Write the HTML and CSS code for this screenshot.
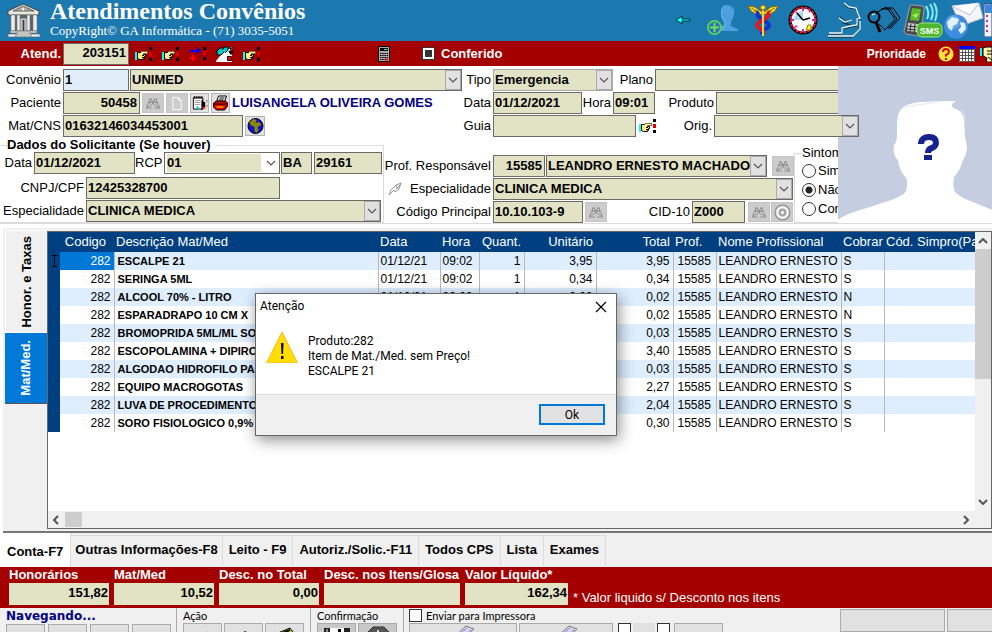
FILE: index.html
```html
<!DOCTYPE html>
<html lang="pt-BR">
<head>
<meta charset="utf-8">
<meta name="viewport" content="width=device-width, initial-scale=1">
<title>Atendimentos Convênios</title>
<link rel="stylesheet" href="styles.css">
</head>
<body>
<svg class="defs" aria-hidden="true">
  <symbol id="chevron" viewBox="0 0 10 6"><path d="M1 1l4 4 4-4" fill="none" stroke="#555" stroke-width="1.2"/></symbol>
  <symbol id="hand" viewBox="0 0 17 16">
    <path d="M0 6h2v8H0z" fill="#0ff"/><path d="M2.500 6.500h3l1-1h6v2h-4v1h2v2h-1v2h-1v1h-4l-2-1z" fill="#ffef7a" stroke="#000"/>
    <path d="M12.500 5.500h-6v2h6z" fill="#fff3a0"/><path d="M7 9.500h2M7 11.500h2" stroke="#000"/>
    <path d="M14 1h3v3h-3zM14 12h3v3h-3z" fill="#000"/><path d="M14 6h3v4h-3z" fill="#d00"/>
  </symbol>
  <symbol id="binoculars" viewBox="0 0 14 12">
    <path d="M3 1h3v2h2V1h3v2l1 2 2 5v1H8V7H6v4H0v-1l2-5 1-2z" fill="#949494"/><path d="M3 6v4M5 5v5M9 5v5M11 6v4M4 3h1M9 3h1" stroke="#fff" fill="none" stroke-dasharray="2 1"/>
  </symbol>
  <symbol id="printer" viewBox="0 0 16 16">
    <path d="M6 1h8l-2 6H4z" fill="#fff" stroke="#000"/><path d="M7 3h5M6 5h5" stroke="#000"/><path d="M1 8l3-2h9l2 2v3l-3 4H4l-3-3z" fill="#d00" stroke="#000"/><path d="M1 9h13" stroke="#000"/><path d="M4 12h7" stroke="#ff0"/>
  </symbol>
  <symbol id="sheet" viewBox="0 0 24 16">
    <path d="M2 14L15 2l8 3L11 16z" fill="#d6d6e6" stroke="#777"/><path d="M8 11l8-7M12 13l8-7" stroke="#55f" stroke-dasharray="2 1"/>
  </symbol>
</svg>

<header class="banner">
  <svg class="logo" viewBox="0 0 33 34">
    <path d="M16 1L1 8v4h31V8z" fill="#e8e8e0" stroke="#444"/><path d="M16 3L6 8h21z" fill="#aaa89c" stroke="#666"/><circle cx="16" cy="6" r="1.500" fill="#eee"/>
    <path d="M3 12h27v15H3z" fill="#5a6468"/>
    <path d="M4 12h4v16H4zM10 12h3v16h-3zM20 12h3v16h-3zM26 12h4v16h-4z" fill="#eee" stroke="#777" stroke-width=".6"/>
    <path d="M14 16h5v12h-5z" fill="#9a9a92" stroke="#ddd"/><path d="M16.500 17v11" stroke="#333"/>
    <path d="M3 28h27v2H3zM1 31h32v3H1z" fill="#eee" stroke="#666" stroke-width=".7"/>
    <path d="M11 28h11l3 6H8z" fill="#c4c4bc" stroke="#777" stroke-width=".6"/>
  </svg>
  <div class="brand">
    <h1>Atendimentos Convênios</h1>
    <p>CopyRight© GA Informática - (71) 3035-5051</p>
  </div>
  <nav class="tools" aria-label="Ferramentas">
    <svg class="t-arrow" viewBox="0 0 16 10"><path d="M1 5l6-4v3h8v2H7v3z" fill="#1ff" stroke="#033"/></svg>
    <svg class="t-user" viewBox="0 0 32 32">
      <path d="M20 1c5 0 8 4 7 9-.5 4-2 6-3 8v4l7 3v2H9v-3l8-3v-4c-2-2-3-4-3-8 0-5 2-8 6-8z" fill="#4d9fe0"/><path d="M18 2c-4 2-4 7-3 11l3 6v4l-7 3" fill="none" stroke="#6fb5ea"/>
      <circle cx="7.500" cy="23.500" r="6.500" fill="#3866c2" stroke="#53d456" stroke-width="2"/><path d="M7.500 19v9M3 23.500h9" stroke="#5dea55" stroke-width="2"/>
    </svg>
    <svg class="t-med" viewBox="0 0 32 33">
      <path d="M1 2l7 1 7 5h2l7-5 7-1-3 5-6 4-5-1h-2l-5 1-6-4z" fill="#ffe23c" stroke="#8b6500"/><path d="M4 4l8 4M7 7l5 2M28 4l-8 4M25 7l-5 2" stroke="#8b6500"/>
      <path d="M12 8c-7 5 10 9 10 13s-8 4-7 9" fill="none" stroke="#1136cf" stroke-width="4"/><path d="M20 8c7 5-10 9-10 13s8 4 6 8" fill="none" stroke="#e01a25" stroke-width="4"/>
      <path d="M16 5v27" stroke="#f4d63a" stroke-width="2"/><circle cx="16" cy="3.500" r="2.500" fill="#ffe23c" stroke="#8b6500"/>
    </svg>
    <svg class="t-clock" viewBox="0 0 30 30">
      <circle cx="15" cy="15" r="13" fill="#fff" stroke="#000" stroke-width="3"/><circle cx="15" cy="15" r="12.500" fill="none" stroke="#e02040" stroke-width="2" stroke-dasharray="3 1"/>
      <path d="M6 15a9 9 0 0 1 9-9v9z" fill="#a9d8ee"/><path d="M15 15L9 8M15 15l7-2" stroke="#000" stroke-width="1.500"/><path d="M15 4v2M15 24v2M4 15h2M24 15h2M7 22l2-1M21 7l1-1M8 7l1 1" stroke="#e31be3" stroke-width="2"/><path d="M18 25l2-5h3v5z" fill="#ff3" stroke="#870"/>
    </svg>
    <svg class="t-face" viewBox="0 0 34 36" fill="none" stroke-width="1.300">
      <path d="M17 2l5 4 7 1 2 6 2 4-3 1v6l-7 1-8 2v5H2M32 20v8l-7 7H1M13 15l6 5 6-2M16 21l8 2" stroke="#173a4d"/><path d="M17 1l5 4 7 1 2 6 2 4-3 1v6l-7 1-8 2v5H2M33 19v8l-7 7H1M12 16l6 4 7-2" stroke="#eef3f5"/>
    </svg>
    <svg class="t-search" viewBox="0 0 34 28" fill="none" stroke="#000">
      <path d="M9 7l10-6 9 12-10 11-6-6M14 3h9l7 10-9 10M18 2h8l7 10-10 11"/><circle cx="7" cy="11" r="5.500" stroke-width="2"/><path d="M9 16l4 10" stroke-width="3"/><path d="M5 9l3-1" stroke="#fff"/>
    </svg>
    <svg class="t-sms" viewBox="0 0 40 36">
      <path d="M7 4q1-1 3-1l9 1q3 0 2 3l-3 25q-1 2-3 2L3 32q-2-1-2-3z" fill="#454b4e" stroke="#9da3a6"/><path d="M9 6l9 1-2 12-9-1z" fill="#5cbd29"/><path d="M9 13l4 3 3-5" fill="#a3ed61"/><path d="M5 21l10 1-1 8-10-1z" fill="#c9cdce"/><path d="M5 24l9 1M4 27l9 1M8 22l-1 8M12 22l-1 8" stroke="#333"/>
      <path d="M23 4q4 7 1 13M27 2q5 7 1 16M31 1q5 8 1 18" stroke="#7df2ff" stroke-width="2" fill="none"/><rect x="14" y="21" width="25" height="14" rx="5" fill="#4cb829" stroke="#a3e37a"/><text x="26.500" y="32" text-anchor="middle" class="sms">SMS</text>
    </svg>
    <svg class="t-mail" viewBox="0 0 40 37">
      <path d="M8 4L35 1l4 15-22 8z" fill="#f5f4fa" stroke="#b8bdd5"/><path d="M8 4l18 9 9-12" fill="#fff" stroke="#b8bdd5"/>
      <circle cx="12" cy="24.500" r="12" fill="#3f8ce0"/><circle cx="9" cy="20" r="7" fill="#78b8f2" opacity=".6"/><path d="M3 20l5-5 7 2-2 5-4 2-1 5-4-3zM16 20l5 1 1 6-5 5-3-4 3-3z" fill="#e2f1fc"/>
    </svg>
    <svg class="t-note" viewBox="0 0 8 34"><path d="M0 1h8v33H0z" fill="#f4f2ff" stroke="#313d7e"/><path d="M1 2h7v8H1z" fill="#3d85d6"/><path d="M3 12v20" stroke="#c32ba5" stroke-width="2" stroke-dasharray="2 3"/></svg>
  </nav>
</header>

<section class="bar">
  <label class="bar-label" for="atend">Atend.</label>
  <input id="atend" class="num" value="203151">
  <div class="bar-icons">
    <svg><use href="#hand"/></svg>
    <svg><use href="#hand"/></svg>
    <svg viewBox="0 0 17 16"><path d="M1 4h7V1l4 4-4 3V6H1z" fill="#00f"/><path d="M3 9h2v2h2v2H5v2H3v-2H1v-2h2z" fill="#f00"/><path d="M14 1h3v3h-3zM14 11h3v3h-3z" fill="#000"/><path d="M14 5h3v4h-3z" fill="#d00"/></svg>
    <svg viewBox="0 0 17 16"><path d="M0 15L11 1h5v15H0z" fill="#fff"/><path d="M1 5l3-3h4v4l-3 3H1z" fill="#0cc" stroke="#000"/><path d="M6 4l3-3h3v3L9 7" fill="#0cc" stroke="#000"/><path d="M12 2h3v5M13 5l2 3 2-3" stroke="#000" stroke-width="1.500" fill="none"/><path d="M11.500 10.500h4v4h-4z" fill="#f00" stroke="#000"/></svg>
    <svg><use href="#hand"/></svg>
  </div>
  <svg class="calc" viewBox="0 0 12 16"><path d="M.5.5h11v15H.5z" fill="#aaa" stroke="#000"/><path d="M2 2h8v3H2z" fill="#000"/><path d="M6 3.500h3" stroke="#0ff"/><path d="M2 7.500h8M2 9.500h8M2 11.500h8" stroke="#000" stroke-dasharray="1.500 .7"/><path d="M2 13.500h5" stroke="#000" stroke-dasharray="1.500 .7"/><path d="M7 13.500h3" stroke="#f00" stroke-width="2"/></svg>
  <label class="check"><input type="checkbox">Conferido</label>
  <strong class="priority">Prioridade</strong>
  <svg class="ic" viewBox="0 0 16 16"><circle cx="8" cy="8" r="7.500" fill="#ffe535"/><path d="M5 6q0-3 3-3t3 3q0 1.500-3 3v1.500M8 12v2" fill="none" stroke="#e00000" stroke-width="2"/></svg>
  <svg class="ic" viewBox="0 0 16 16"><path d="M0 0h16v16H0z" fill="#fff"/><path d="M0 0h16v3H0z" fill="#00f"/><path d="M.5 3.500h15v12H.5zM1 6.500h14M1 9.500h14M1 12.500h14M3.500 4v11M6.500 4v11M9.500 4v11M12.500 4v11" stroke="#333" fill="none" stroke-width=".8"/></svg>
  <svg class="ic-cut" viewBox="0 0 12 16"><path d="M0 2h2v8H0z" fill="#0ff"/><path d="M3 2l3-1h6v15H6l1-4-4-2z" fill="#fff6b0" stroke="#000"/><path d="M7 5h5M7 8h5M8 11l4 3" stroke="#000"/></svg>
</section>

<form class="form">
  <div class="row row-convenio">
    <label for="conv">Convênio</label>
    <input id="conv" class="light" value="1">
    <span class="combo"><select aria-label="Nome do convênio"><option>UNIMED</option></select><span class="arrow"><svg><use href="#chevron"/></svg></span></span>
    <label for="tipo">Tipo</label>
    <span class="combo soft"><select id="tipo"><option>Emergencia</option></select><span class="arrow"><svg><use href="#chevron"/></svg></span></span>
    <label for="plano">Plano</label>
    <input id="plano">
  </div>
  <div class="row row-paciente">
    <label for="pac">Paciente</label>
    <input id="pac" class="num" value="50458">
    <div class="buttons">
      <button type="button" class="off" aria-label="Procurar"><svg viewBox="0 0 14 12"><use href="#binoculars"/></svg></button>
      <button type="button" class="off" aria-label="Novo"><svg viewBox="0 0 12 14"><path d="M1.500.5h6l3 3v10h-9zM7.500.5v3h3" fill="#ccc" stroke="#fff"/></svg></button>
      <button type="button" class="sm" aria-label="Agenda"><svg viewBox="0 0 18 16"><path d="M2.500 2.500h10v12h-10z" fill="#fff" stroke="#000"/><path d="M3 2h9" stroke="#000" stroke-width="3" stroke-dasharray="1 1"/><path d="M4 5.500h6M4 7.500h6M4 9.500h6" stroke="#999"/><path d="M12 5v10M14 7v6" stroke="#000" stroke-width="2"/><path d="M6 12l3 3" stroke="#0cc" stroke-width="2"/><path d="M12 13h3" stroke="#f22" stroke-width="2"/><path d="M17 5v2M17 10v2" stroke="#a60"/></svg></button>
      <button type="button" class="sm" aria-label="Imprimir"><svg viewBox="0 0 16 16"><use href="#printer"/></svg></button>
    </div>
    <strong class="patient">LUISANGELA OLIVEIRA GOMES</strong>
    <label for="data">Data</label>
    <input id="data" value="01/12/2021">
    <label for="hora">Hora</label>
    <input id="hora" value="09:01">
    <label for="prod">Produto</label>
    <input id="prod">
  </div>
  <div class="row row-cns">
    <label for="cns">Mat/CNS</label>
    <input id="cns" value="01632146034453001">
    <button type="button" class="globe" aria-label="Internet"><svg viewBox="0 0 16 16"><circle cx="8" cy="8" r="7.500" fill="#11c" stroke="#000"/><path d="M2 4l4-3 3 1-1 3 3-1 3 2-2 2-2 1 1 3-2 3-2-2V9L5 8 3 7z" fill="#8a8a00"/></svg></button>
    <label for="guia">Guia</label>
    <input id="guia">
    <svg class="hand"><use href="#hand"/></svg>
    <label for="orig">Orig.</label>
    <span class="combo over"><select id="orig"><option></option></select><span class="arrow"><svg><use href="#chevron"/></svg></span></span>
  </div>
  <div class="lower">
    <fieldset class="requester">
      <legend>Dados do Solicitante (Se houver)</legend>
      <div class="row row-rcp">
        <label for="sdata">Data</label>
        <input id="sdata" value="01/12/2021">
        <label for="rcp">RCP</label>
        <span class="combo plain"><select id="rcp"><option>01</option></select><span class="arrow"><svg><use href="#chevron"/></svg></span></span>
        <input class="uf" aria-label="UF" value="BA">
        <input aria-label="Número do conselho" value="29161">
      </div>
      <div class="row row-cnpj">
        <label for="cnpj">CNPJ/CPF</label>
        <input id="cnpj" value="12425328700">
      </div>
      <div class="row row-esp">
        <label for="esp">Especialidade</label>
        <span class="combo"><select id="esp"><option>CLINICA MEDICA</option></select><span class="arrow"><svg><use href="#chevron"/></svg></span></span>
      </div>
    </fieldset>
    <div class="doctor">
      <div class="row row-prof">
        <label for="prof">Prof. Responsável</label>
        <input id="prof" class="num" value="15585">
        <span class="combo"><select aria-label="Nome do profissional"><option>LEANDRO ERNESTO MACHADO</option></select><span class="arrow"><svg><use href="#chevron"/></svg></span></span>
        <button type="button" class="off" aria-label="Procurar"><svg viewBox="0 0 14 12"><use href="#binoculars"/></svg></button>
      </div>
      <div class="row row-pesp">
        <svg class="pen" viewBox="0 0 14 14"><path d="M1 13l2-5 5-5 5-2-2 6-4 3-1-2zM8 3l1 4 4-6" fill="#fff" stroke="#999"/></svg>
        <label for="pesp">Especialidade</label>
        <span class="combo"><select id="pesp"><option>CLINICA MEDICA</option></select><span class="arrow"><svg><use href="#chevron"/></svg></span></span>
      </div>
      <div class="row row-cod">
        <label for="cod">Código Principal</label>
        <input id="cod" value="10.10.103-9">
        <button type="button" class="off" aria-label="Procurar código"><svg viewBox="0 0 14 12"><use href="#binoculars"/></svg></button>
        <label for="cid">CID-10</label>
        <input id="cid" value="Z000">
        <button type="button" class="off" aria-label="Procurar CID"><svg viewBox="0 0 14 12"><use href="#binoculars"/></svg></button>
        <button type="button" class="off" aria-label="Alvo"><svg viewBox="0 0 16 16" class="target"><circle cx="8" cy="8" r="7" fill="#ccc" stroke="#888"/><circle cx="8" cy="8" r="5" fill="none" stroke="#fff" stroke-width="1.500"/><circle cx="8" cy="8" r="2.500" fill="#eee" stroke="#888"/></svg></button>
      </div>
    </div>
    <fieldset class="symptoms">
      <legend>Sintomas</legend>
      <label><input type="radio" name="s">Sim</label>
      <label><input type="radio" name="s" checked>Não</label>
      <label><input type="radio" name="s">Con</label>
    </fieldset>
  </div>
  <svg class="photo" viewBox="0 0 154 157">
    <path d="M0 0h154v157H0z" fill="#c5cde1"/>
    <path d="M0 157v-3c8-7 24-10 38-15 12-4 27-8 30-14 1-4 2-9 0-13-4-5-7-10-8-18-4-3-5-10-4-15 3-3 3-8 3-14 0-10 0-16 4-22 5-5 14-7 23-7 10-1 22-1 32-1-4 2-5 4-3 7 6 2 10 4 11 12l1 17c1 4 2 8 2 12-1 5-2 8-4 11-2 6-4 12-9 17-1 6-1 11 1 15 6 7 22 11 37 18v13z" fill="#fff"/>
    <path d="M62 45c2-6 22-6 38-9M123 43c3 4 4 9 4 13" stroke="#e3e8f2" fill="none"/>
    <path d="M83 78v-1q1-6 8-6 7 0 7 6 0 3-4 5-4 1-4 5" fill="none" stroke="#16228f" stroke-width="6"/><path d="M86 89h8v5h-8z" fill="#16228f"/>
  </svg>
</form>

<main class="workspace">
  <div class="side" role="tablist">
    <button type="button" class="side-tab"><span>Honor. e Taxas</span></button>
    <button type="button" class="side-tab current"><span>Mat/Med.</span></button>
  </div>
  <div class="sheet">
    <div class="view">
      <table>
        <colgroup><col class="c-mark"><col class="c-cod"><col class="c-desc"><col class="c-data"><col class="c-hora"><col class="c-qtd"><col class="c-unit"><col class="c-total"><col class="c-prof"><col class="c-nome"><col class="c-cobrar"><col></colgroup>
        <thead><tr><th></th><th class="r">Codigo</th><th>Descrição Mat/Med</th><th>Data</th><th>Hora</th><th class="r">Quant.</th><th class="r">Unitário</th><th class="r">Total</th><th>Prof.</th><th>Nome Profissional</th><th>Cobrar</th><th>Cód. Simpro(Pa</th></tr></thead>
        <tbody>
          <tr><td><svg class="caret" viewBox="0 0 7 12"><path d="M1 .5h5M1 11.500h5M3.500 0v12" stroke="#000"/></svg></td><td class="r sel">282</td><td>ESCALPE 21</td><td>01/12/21</td><td>09:02</td><td class="r">1</td><td class="r">3,95</td><td class="r">3,95</td><td>15585</td><td>LEANDRO ERNESTO</td><td>S</td><td></td></tr>
          <tr><td></td><td class="r">282</td><td>SERINGA 5ML</td><td>01/12/21</td><td>09:02</td><td class="r">1</td><td class="r">0,34</td><td class="r">0,34</td><td>15585</td><td>LEANDRO ERNESTO</td><td>S</td><td></td></tr>
          <tr><td></td><td class="r">282</td><td>ALCOOL 70% - LITRO</td><td>01/12/21</td><td>09:02</td><td class="r">1</td><td class="r">0,02</td><td class="r">0,02</td><td>15585</td><td>LEANDRO ERNESTO</td><td>N</td><td></td></tr>
          <tr><td></td><td class="r">282</td><td>ESPARADRAPO 10 CM X</td><td></td><td></td><td></td><td></td><td class="r">0,02</td><td>15585</td><td>LEANDRO ERNESTO</td><td>N</td><td></td></tr>
          <tr><td></td><td class="r">282</td><td>BROMOPRIDA 5ML/ML SO</td><td></td><td></td><td></td><td></td><td class="r">0,03</td><td>15585</td><td>LEANDRO ERNESTO</td><td>S</td><td></td></tr>
          <tr><td></td><td class="r">282</td><td>ESCOPOLAMINA + DIPIRO</td><td></td><td></td><td></td><td></td><td class="r">3,40</td><td>15585</td><td>LEANDRO ERNESTO</td><td>S</td><td></td></tr>
          <tr><td></td><td class="r">282</td><td>ALGODAO HIDROFILO PA</td><td></td><td></td><td></td><td></td><td class="r">0,03</td><td>15585</td><td>LEANDRO ERNESTO</td><td>S</td><td></td></tr>
          <tr><td></td><td class="r">282</td><td>EQUIPO MACROGOTAS</td><td></td><td></td><td></td><td></td><td class="r">2,27</td><td>15585</td><td>LEANDRO ERNESTO</td><td>S</td><td></td></tr>
          <tr><td></td><td class="r">282</td><td>LUVA DE PROCEDIMENTO</td><td></td><td></td><td></td><td></td><td class="r">2,04</td><td>15585</td><td>LEANDRO ERNESTO</td><td>S</td><td></td></tr>
          <tr><td></td><td class="r">282</td><td>SORO FISIOLOGICO 0,9%</td><td></td><td></td><td></td><td></td><td class="r">0,30</td><td>15585</td><td>LEANDRO ERNESTO</td><td>S</td><td></td></tr>
        </tbody>
      </table>
      <div class="vscroll">
        <svg viewBox="0 0 10 6"><path d="M1 5l4-4 4 4" fill="none" stroke="#555" stroke-width="2"/></svg>
        <span class="vthumb"></span>
        <svg viewBox="0 0 10 6"><path d="M1 1l4 4 4-4" fill="none" stroke="#555" stroke-width="2"/></svg>
      </div>
    </div>
    <div class="hscroll">
      <svg viewBox="0 0 6 10"><path d="M5 1L1 5l4 4" fill="none" stroke="#555" stroke-width="2"/></svg>
      <span class="hthumb"></span>
      <svg viewBox="0 0 6 10"><path d="M1 1l4 4-4 4" fill="none" stroke="#555" stroke-width="2"/></svg>
    </div>
  </div>
  <div class="dialog" role="alertdialog" aria-labelledby="dt">
    <div class="dialog-head"><span id="dt">Atenção</span><button type="button" class="close" aria-label="Fechar"><svg viewBox="0 0 12 12"><path d="M1 1l10 10M11 1L1 11" stroke="#000" stroke-width="1.200"/></svg></button></div>
    <div class="dialog-body">
      <svg viewBox="0 0 32 32"><path d="M16 1l15.500 31H.5z" fill="#ffde00" stroke="#f7b32b"/><path d="M15 12h2.500l-.5 11h-1.500zM15 25h2.500v3H15z" fill="#000"/></svg>
      <p>Produto:282<br>Item de Mat./Med. sem Preço!<br>ESCALPE 21</p>
    </div>
    <div class="dialog-foot"><button type="button" class="ok">Ok</button></div>
  </div>
</main>

<nav class="tabs">
  <button type="button" class="tab current">Conta-F7</button>
  <button type="button" class="tab tight">Outras Informações-F8</button>
  <button type="button" class="tab">Leito - F9</button>
  <button type="button" class="tab">Autoriz./Solic.-F11</button>
  <button type="button" class="tab">Todos CPS</button>
  <button type="button" class="tab">Lista</button>
  <button type="button" class="tab">Exames</button>
</nav>

<section class="totals">
  <label>Honorários<input value="151,82"></label>
  <label>Mat/Med<input value="10,52"></label>
  <label>Desc. no Total<input value="0,00"></label>
  <label class="wide">Desc. nos Itens/Glosa<input value=""></label>
  <label class="net">Valor Líquido*<input value="162,34"></label>
  <p>* Valor liquido s/ Desconto nos itens</p>
</section>

<footer class="actions">
  <div class="group nav-group">
    <strong>Navegando...</strong>
    <div class="keys"><button type="button" aria-label="Primeiro"></button><button type="button" aria-label="Anterior"></button><button type="button" aria-label="Próximo"><svg viewBox="0 0 24 16"><path d="M10 9l4-2 2 1v6z" fill="#0a0"/></svg></button><button type="button" aria-label="Último"></button></div>
  </div>
  <div class="group">
    <span>Ação</span>
    <div class="keys"><button type="button" aria-label="Novo"><svg viewBox="0 0 24 16"><path d="M13 9l3-2 1 3-3 5z" fill="#cc3"/></svg></button><button type="button" aria-label="Editar"><svg viewBox="0 0 24 16"><path d="M10 9l3-2 2 1v6h-5z" fill="#222"/></svg></button><button type="button" aria-label="Excluir"><svg viewBox="0 0 24 16"><path d="M5 9l12-5 3 4-3 8H7z" fill="#dcd23a" stroke="#000"/><path d="M7 10l10-4M8 13l10-4" stroke="#000" stroke-width="2"/></svg></button></div>
  </div>
  <div class="group">
    <span>Confirmação</span>
    <div class="keys"><button type="button" class="dark" aria-label="Salvar"><svg viewBox="0 0 28 16"><path d="M1 4h26v12H1z" fill="#222"/><path d="M7 4h14v5H7z" fill="#fff"/><path d="M15 5h3v4h-3z" fill="#000"/><path d="M3 5h2v8H3z" fill="#888"/></svg></button><button type="button" class="dark" aria-label="Cancelar"><svg viewBox="0 0 28 16"><path d="M9 3h11l7 7v6H2v-6z" fill="#555" stroke="#333"/><path d="M8 9h12M14 6v9" stroke="#ddd" stroke-width="2"/></svg></button></div>
  </div>
  <div class="group print">
    <label class="opt"><input type="checkbox">Enviar para Impressora</label>
    <div class="keys"><button type="button" class="k-long" aria-label="Imprimir conta"><svg viewBox="0 0 24 16"><use href="#sheet"/></svg></button><button type="button" class="k-mid" aria-label="Imprimir guia"><svg viewBox="0 0 24 16"><use href="#sheet"/></svg></button><input type="checkbox" class="first" aria-label="Opção 1"><span class="plate"></span><input type="checkbox" aria-label="Opção 2"><button type="button" class="k-short" aria-label="Opções"></button></div>
  </div>
  <div class="big"><button type="button" aria-label="Solicitação"></button><button type="button" aria-label="Fechamento"></button></div>
</footer>
</body>
</html>
```
FILE: styles.css
```css
* { box-sizing: border-box; }

:root {
  --blue: #1c79af;
  --red: #a40000;
  --field: #e2e2c4;
  --edge: #6b6b66;
  --face: #f0f0f0;
  --line: #dcdcdc;
  --navy: #004080;
  --accent: #0078d7;
}

body {
  display: flex;
  flex-direction: column;
  height: 100vh;
  margin: 0;
  overflow: hidden;
  background: #fff;
  color: #000;
  font: 13px/16px "Liberation Sans", Arial, sans-serif;
}

body > * { flex: none; }
.defs { position: absolute; width: 0; height: 0; }
svg { display: block; flex: none; }
button, input, select { font: inherit; margin: 0; min-width: 0; }
button { padding: 0; color: inherit; }
h1, p { margin: 0; }

/* banner */
.banner { display: flex; height: 41px; padding-left: 7px; background: var(--blue); color: #fff; overflow: hidden; }
.logo { width: 33px; height: 34px; margin: 3px 10px 0 0; }
.brand { font-family: "Liberation Serif", "Times New Roman", serif; white-space: nowrap; }
.brand h1 { font-size: 24px; line-height: 23px; }
.brand p { font-size: 13px; line-height: 15px; }
.tools { display: flex; align-items: center; margin-left: auto; height: 40px; }
.t-arrow { width: 16px; height: 10px; margin-right: 16px; }
.t-user { width: 32px; height: 32px; margin-right: 8px; }
.t-med { width: 32px; height: 33px; margin-right: 9px; }
.t-clock { width: 30px; height: 30px; margin-right: 9px; }
.t-face { width: 34px; height: 36px; margin-right: 6px; }
.t-search { width: 34px; height: 28px; margin-right: 2px; }
.t-sms { width: 40px; height: 36px; margin-right: 1px; }
.t-mail { width: 40px; height: 37px; }
.t-note { width: 8px; height: 34px; }
.sms { font: bold 9px "Liberation Sans", sans-serif; fill: #fff; }

/* red bar */
.bar { display: flex; align-items: center; height: 25px; background: var(--red); color: #fff; font-weight: bold; overflow: hidden; }
.bar-label { width: 63px; padding-right: 2px; text-align: right; }
.bar input:not([type]) { width: 66px; }
.bar-icons { display: flex; gap: 10px; margin-left: 6px; }
.bar-icons svg { width: 17px; height: 16px; }
.calc { width: 12px; height: 16px; margin-left: 118px; }
.check { display: flex; align-items: center; gap: 6px; margin-left: 32px; }
.check input { appearance: none; width: 13px; height: 13px; border: 3px solid #fff; background: #333; outline: 1px solid #333; outline-offset: -1px; }
.priority { margin: 0 12px 0 auto; font-size: 12px; }
.ic { width: 16px; height: 16px; margin-right: 5px; }
.ic-cut { width: 12px; height: 16px; }

/* form fields */
.form input:not([type]), .bar input:not([type]) {
  height: 22px;
  padding: 0 2px 2px 1px;
  border: 1px solid var(--edge);
  border-radius: 0;
  background: var(--field);
  color: #000;
  font-weight: bold;
}
.form input.light { background: #e0eef9; }
.form input.num, .bar input.num { text-align: right; }

.combo { display: grid; height: 22px; min-width: 0; border: 1px solid var(--edge); background: var(--field); }
.combo select, .combo .arrow { grid-area: 1 / 1; }
.combo select { appearance: none; width: 100%; height: 20px; padding: 0 16px 0 1px; border: 0; background: none; color: #000; font-weight: bold; }
.arrow { display: grid; place-items: center; justify-self: end; width: 16px; height: 20px; border: 1px solid #aaa; background: #e1e1e1; pointer-events: none; }
.arrow svg { width: 10px; height: 6px; }
.combo.soft { border-color: #aaa; }
.combo.plain { background: #fff; }
.combo.plain select { width: calc(100% - 20px); height: 18px; margin: 1px 2px; background: var(--field); padding: 0; }
.combo.plain .arrow { border: 0; background: none; }
.combo.over { position: relative; z-index: 2; }

.form { position: relative; padding-top: 3px; border-bottom: 1px solid var(--line); overflow: hidden; }
.row { display: grid; align-items: center; height: 22px; margin-bottom: 1px; }
.row label { padding-right: 2px; text-align: right; white-space: nowrap; }
.row-convenio { grid-template-columns: 63px 67px 332px 31px 120px 42px 1fr; }
.row-convenio .light { width: 66px; }
.row-paciente { grid-template-columns: 63px 77px 92px 231px 30px 89px 31px 42px 61px 1fr; }
.row-cns { grid-template-columns: 63px 182px 20px 228px 143px 24px 54px 145px; }
.row-cns #cns { width: 180px; }
.patient { color: #000080; white-space: nowrap; }
.buttons { display: flex; gap: 2px; padding-left: 2px; }
.form button { display: grid; place-items: center; height: 20px; border: 1px solid #b4b4b4; background: #e1e1e1; }
.form button.off { width: 22px; height: 20px; border-color: #c4c4c4; background: #ccc; }
.form button.sm { width: 19px; }
.off svg { width: 14px; height: 13px; }
.off .target { width: 17px; height: 17px; }
.sm svg, .globe svg { width: 17px; height: 16px; }
.hand { width: 17px; height: 16px; margin-left: 3px; }

.lower { display: flex; height: 85px; }
fieldset { margin: 0; padding: 0; border: 1px solid var(--line); min-width: 0; }
legend { padding: 0; }
.requester { width: 384px; border-left: 0; }
.requester legend { margin-left: 7px; padding-right: 4px; font-weight: bold; line-height: 14px; }
.row-rcp { grid-template-columns: 34px 101px 29px 117px 33px 68px; margin-bottom: 3px; }
.row-rcp .combo { width: 116px; }
.row-rcp .uf { width: 31px; }
.row-cnpj { grid-template-columns: 86px 194px; }
.row-esp { grid-template-columns: 86px 295px; }
.doctor { width: 410px; padding-top: 17px; }
.row-prof { grid-template-columns: 109px 53px 221px 5px 22px; }
.row-prof input { width: 52px; }
.row-prof button { grid-column: 5; }
.row-pesp { grid-template-columns: 4px 14px 91px 300px; }
.row-pesp .pen { grid-column: 2; width: 14px; height: 14px; }
.row-cod { grid-template-columns: 109px 92px 22px 85px 56px 23px 22px; }
.row-cod #cod { width: 90px; }
.row-cod #cid { width: 53px; }
.symptoms { flex: 1; margin-top: 7px; }
.symptoms legend { margin-left: 7px; line-height: 16px; }
.symptoms label { display: flex; align-items: center; gap: 2px; height: 19px; padding-left: 7px; }
.symptoms input { appearance: none; width: 14px; height: 14px; border: 1px solid #333; border-radius: 50%; background: #fff; }
.symptoms input:checked { background: radial-gradient(circle, #222 0 3px, #fff 4px); }
.photo { position: absolute; top: 0; right: 0; width: 154px; height: 157px; z-index: 1; }

/* item sheet */
.workspace { position: relative; display: flex; margin: 4px 0 0 3px; background: var(--face); border-bottom: 2px solid #777; }
.side { width: 44px; padding-top: 2px; }
.side-tab { display: grid; place-items: center; width: 42px; height: 103px; margin-left: 2px; border: 1px solid #fff; border-right: 0; background: var(--face); font-weight: bold; }
.side-tab span { writing-mode: vertical-rl; transform: rotate(180deg); }
.side-tab.current { height: 71px; border: 0; border-bottom: 1px solid #555; background: var(--accent); color: #fff; }
.sheet { flex: 1; min-width: 0; margin: 3px 0 2px; border: 1px solid #666; background: #fff; }
.view { display: flex; min-height: 279px; }
table { flex: 1; min-width: 0; align-self: flex-start; border-collapse: collapse; table-layout: fixed; width: 100%; }
.c-mark { width: 12px; }
.c-cod { width: 54px; }
.c-desc { width: 264px; }
.c-data { width: 62px; }
.c-hora { width: 39px; }
.c-qtd { width: 45px; }
.c-unit { width: 72px; }
.c-total { width: 77px; }
.c-prof { width: 43px; }
.c-nome { width: 125px; }
.c-cobrar { width: 43px; }
th, td { padding: 0 3px 0 2px; overflow: hidden; white-space: nowrap; text-align: left; }
th { height: 20px; background: var(--navy); color: #fff; font-weight: normal; }
th:nth-child(2) { padding-right: 8px; }
td { height: 18px; border-right: 1px solid #b8b8b8; font-size: 12px; line-height: 18px; }
td:first-child { padding: 0; border: 0; background: var(--navy); }
td:last-child { border-right: 0; }
td:nth-child(3) { padding-left: 3px; font-size: 11px; font-weight: bold; }
td:nth-child(9) { padding-left: 4px; }
th.r, td.r { text-align: right; }
tbody tr:nth-child(odd) { background: #deeeff; }
td.sel { background: var(--accent); color: #fff; }
.caret { width: 7px; height: 12px; margin-left: 3px; }
.vscroll { display: flex; flex-direction: column; align-items: center; width: 16px; padding: 6px 0; background: var(--face); }
.vscroll svg { width: 10px; height: 6px; }
.vthumb { width: 16px; height: 130px; margin: 5px 0 auto; background: #cdcdcd; }
.hscroll { display: flex; align-items: center; height: 17px; padding: 0 22px 0 5px; background: var(--face); }
.hscroll svg { width: 6px; height: 10px; }
.hthumb { width: 17px; height: 15px; margin: 0 auto 0 6px; background: #cdcdcd; }

/* message box */
.dialog { position: absolute; top: 65px; left: 252px; width: 362px; z-index: 5; border: 1px solid #666; background: #fff; box-shadow: 2px 4px 14px rgba(0, 0, 0, .45); font: 12px/15px Roboto, "Noto Sans", sans-serif; }
.dialog-head { display: flex; justify-content: space-between; align-items: center; height: 25px; padding: 0 9px 0 4px; }
.close { border: 0; background: none; }
.close svg { width: 12px; height: 12px; }
.dialog-body { display: flex; gap: 10px; height: 75px; padding: 12px 10px; }
.dialog-body svg { width: 32px; height: 32px; }
.dialog-body p { padding-top: 3px; }
.dialog-foot { display: flex; justify-content: flex-end; padding: 9px 11px 10px; border-top: 1px solid var(--line); background: var(--face); }
.ok { width: 66px; height: 21px; border: 2px solid var(--accent); background: #e1e1e1; line-height: 16px; }

/* page tabs */
.tabs { display: flex; align-items: flex-start; height: 34px; background: var(--face); }
.tab { height: 31px; margin-top: 2px; padding: 0 6px 2px; border: solid var(--line); border-width: 1px 1px 0 0; background: var(--face); font-weight: bold; white-space: nowrap; }
.tab.tight { padding: 0 4px 2px; }
.tab.current { height: 34px; margin-top: 0; padding: 4px 7px 0; border-top: 0; background: #fff; }

/* totals */
.totals { display: flex; gap: 5px; height: 41px; padding: 0 9px; background: var(--red); color: #fff; }
.totals label { display: flex; flex-direction: column; width: 100px; font-weight: bold; white-space: nowrap; }
.totals label.wide { width: 136px; }
.totals label.net { width: 103px; }
.totals input { height: 22px; padding: 0 1px 4px; border: 0; border-radius: 0; background: var(--field); text-align: right; font-weight: bold; }
.totals p { align-self: flex-end; padding-bottom: 2px; }

/* action strip */
.actions { display: flex; flex: 1 1 0; min-height: 24px; overflow: hidden; background: var(--face); font: 11px/15px Lato, sans-serif; }
.group { padding: 0 6px; border-right: 1px solid #aaa; }
.group strong { color: #000080; font: bold 12px/15px "DejaVu Sans", sans-serif; }
.nav-group { padding-right: 5px; }
.nav-group .keys { gap: 3px; }
.group.print { padding-left: 5px; border: 0; }
.keys { display: flex; gap: 2px; }
.keys button { display: flex; justify-content: center; width: 39px; height: 40px; border: 1px solid #aaa; background: #e1e1e1; }
.keys svg { width: 28px; height: 16px; }
.keys .dark { background: #c8c8c8; }
.keys .k-long { width: 108px; }
.keys .k-mid { width: 94px; }
.keys .k-short { width: 49px; margin-left: 2px; }
.keys .first { margin-left: 3px; }
.plate { width: 22px; height: 40px; background: #e1e1e1; }
.actions input { appearance: none; width: 13px; height: 13px; border: 1px solid #333; background: #fff; }
.opt { display: flex; align-items: center; gap: 4px; height: 15px; }
.big { display: flex; gap: 2px; margin-left: auto; padding-top: 1px; }
.big button { width: 105px; border: 1px solid #aaa; background: #e1e1e1; }
.big button:last-child { width: 45px; border-right: 0; }
```
